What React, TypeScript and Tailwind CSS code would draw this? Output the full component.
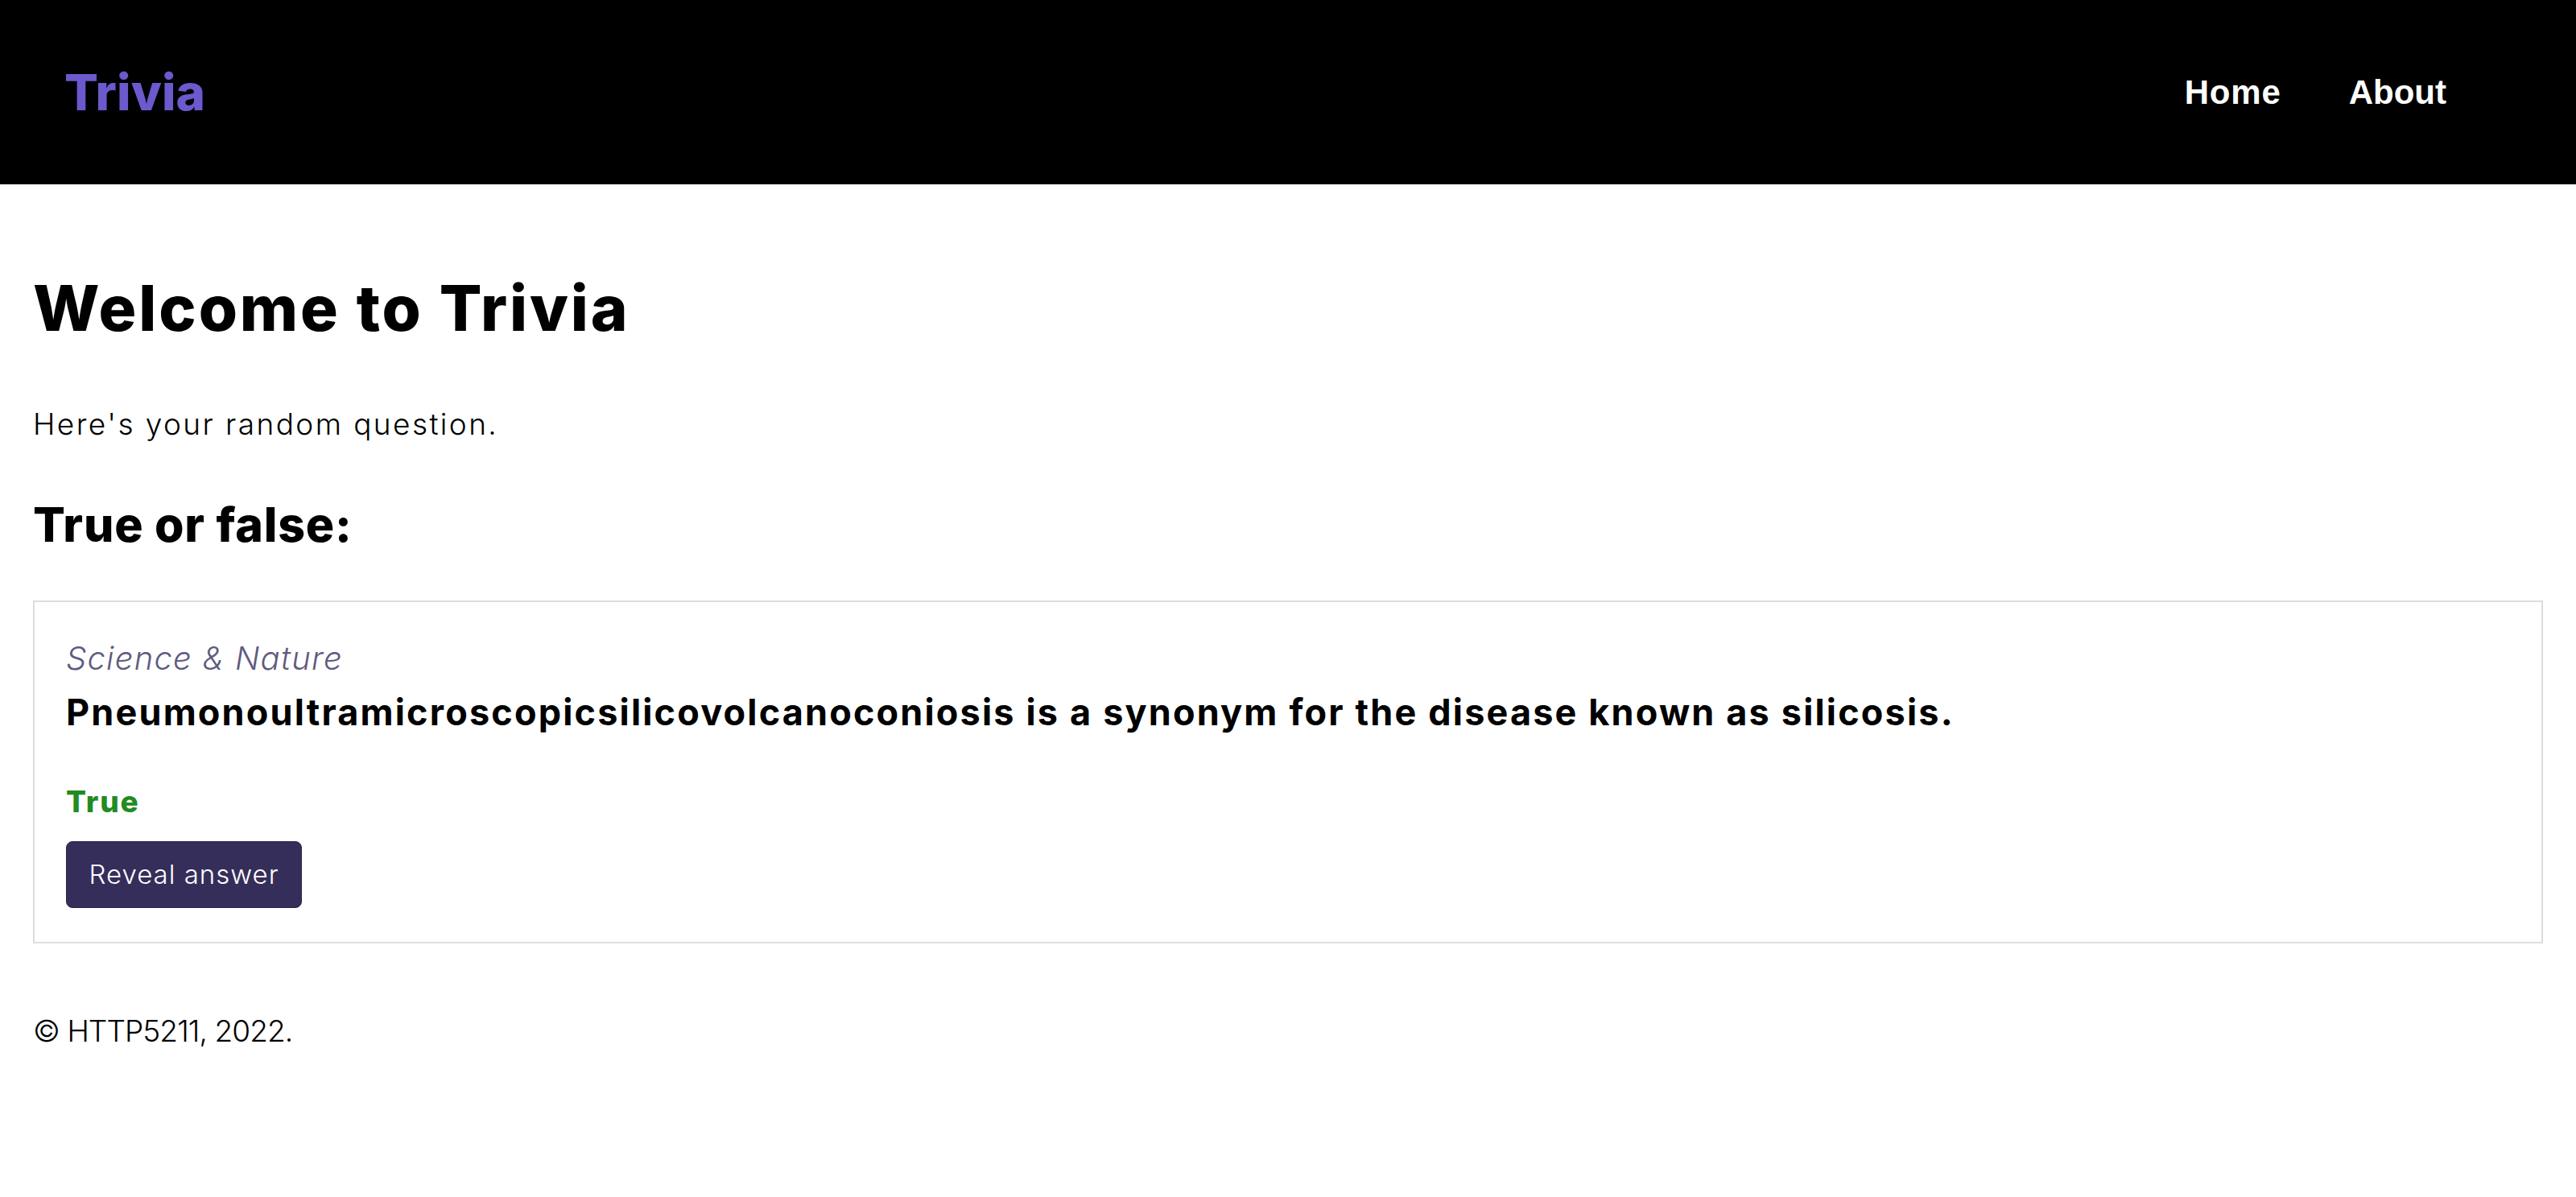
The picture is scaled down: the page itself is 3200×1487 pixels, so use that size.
import React from 'react'

// ─── page: trivia question ───────────────────────────────────────────
const FONT = "font-['Inter',sans-serif]"

export default function App() {
  return (
    <div className={`min-h-screen bg-white text-black ${FONT}`}>
      {/* header */}
      <header className="flex h-[229px] items-center justify-between bg-black pl-[80px] pr-[161px]">
        <a className="text-[62px] leading-none font-extrabold tracking-[0.002em] text-[#6a5acd]" href="#">
          Trivia
        </a>
        <nav className="flex items-center gap-[84px] font-['Liberation_Sans',Arial,sans-serif] text-[42px] leading-none font-bold text-white">
          <a className="tracking-[0.02em]" href="#">Home</a>
          <a href="#">About</a>
        </nav>
      </header>

      <main className="px-[41px]">
        <h1 className="mt-[115px] text-[78px] leading-none font-extrabold tracking-[0.037em]">Welcome to Trivia</h1>
        <p className="mt-[86px] text-[37px] leading-none font-light tracking-[0.065em]">Here's your random question.</p>
        <h2 className="mt-[77px] text-[59px] leading-none font-extrabold tracking-[0.013em]">True or false:</h2>

        {/* question card */}
        <section className="mt-[65px] border-2 border-[#dddddd] pt-[50px] pb-[42px] pl-[39px] pr-[39px]">
          <p className="text-[40px] leading-none font-light tracking-[0.031em] text-[#5e5b80] italic">Science &amp; Nature</p>
          <p className="mt-[24px] text-[45px] leading-none font-bold tracking-[0.048em]">
            Pneumonoultramicroscopicsilicovolcanoconiosis is a synonym for the disease known as silicosis.
          </p>
          <p className="mt-[70px] text-[37px] leading-none font-extrabold tracking-[0.05em] text-[#228b22]">True</p>
          <button className="mt-[31px] flex h-[83px] w-[293px] items-center justify-center rounded-[8px] border border-[#29244d] bg-[#352e5b] text-[33px] font-light tracking-[0.03em] text-white">
            Reveal answer
          </button>
        </section>

        <footer className="mt-[90px] text-[37px] leading-none font-light tracking-[-0.025em]">© HTTP5211, 2022.</footer>
      </main>
    </div>
  )
}
